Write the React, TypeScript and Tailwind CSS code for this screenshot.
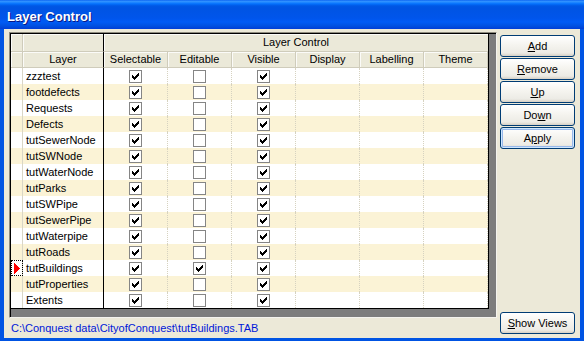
import React from "react";

const LAYERS = [
  "zzztest",
  "footdefects",
  "Requests",
  "Defects",
  "tutSewerNode",
  "tutSWNode",
  "tutWaterNode",
  "tutParks",
  "tutSWPipe",
  "tutSewerPipe",
  "tutWaterpipe",
  "tutRoads",
  "tutBuildings",
  "tutProperties",
  "Extents",
];

const COLUMNS = ["Selectable", "Editable", "Visible", "Display", "Labelling", "Theme"];
const CURRENT = "tutBuildings";

// classic 7x7 tick, drawn pixel by pixel inside the 11x11 box
const TICK = [
  [8, 2, 1],
  [7, 3, 2],
  [2, 4, 1],
  [6, 4, 3],
  [2, 5, 2],
  [5, 5, 3],
  [2, 6, 5],
  [3, 7, 3],
  [4, 8, 1],
]
  .map(([x, y, w]) => `M${x} ${y}h${w}v1h-${w}z`)
  .join("");

function CheckBox({ on }: { on: boolean }) {
  return (
    <span className="block w-[13px] h-[13px] border border-[#858585] bg-white">
      {on && (
        <svg width="11" height="11" viewBox="0 0 11 11" shapeRendering="crispEdges">
          <path d={TICK} fill="#000" />
        </svg>
      )}
    </span>
  );
}

function HeadCell({ className = "", children }: { className?: string; children?: React.ReactNode }) {
  return (
    <div
      className={`flex items-center justify-center bg-[#ebe9d9] border-b border-[#cfccbb] shadow-[inset_1px_1px_0_#fbfbf8] ${className}`}
    >
      {children}
    </div>
  );
}

function XpButton({ children, focused = false }: { children: React.ReactNode; focused?: boolean }) {
  return (
    <button
      type="button"
      className={`h-[22px] w-[75px] rounded-[3px] border border-[#003c74] text-[11px] text-black leading-none bg-[linear-gradient(180deg,#ffffff_0%,#f5f4ef_45%,#ecebe5_85%,#d6d0c5_100%)] ${
        focused ? "shadow-[inset_0_0_0_1px_#cee7ff,inset_0_0_0_2px_#98b8ea]" : ""
      }`}
    >
      {children}
    </button>
  );
}

export default function App() {
  return (
    <div
      className="w-[584px] h-[341px] flex flex-col bg-[#0054e3] overflow-hidden"
      style={{ fontFamily: '"Liberation Sans", Arial, sans-serif' }}
    >
      {/* title bar */}
      <div className="h-[29px] shrink-0 flex items-center pl-[7px] pt-[4px] bg-[linear-gradient(180deg,#0058ee_0px,#3593ff_1px,#288eff_2px,#127dff_3px,#036ffc_4px,#0262ee_5px,#0057e5_6px,#0054e3_8px,#0055eb_18px,#005bf5_22px,#0050e0_26px,#003dd7_29px)]">
        <span className="text-white font-bold text-[13px] [text-shadow:1px_1px_0_#0a1883]">Layer Control</span>
      </div>

      {/* client */}
      <div className="flex-1 mx-[4px] mb-[3px] bg-[#ece9d8] flex pt-[3px] pl-[5px]">
        <div className="flex flex-col">
          {/* grid */}
          <div className="w-[488px] h-[286px] border-t border-l border-[#8e8b7e] border-r border-b border-r-[#f4f3ee] border-b-[#f4f3ee] bg-[#7d7d7d]">
            <div className="h-full border-t border-l border-black">
              <div className="w-[478px] border-r border-b border-black text-[11px] text-black">
                {/* header row 1 */}
                <div className="flex h-[18px]">
                  <HeadCell className="w-[12px] border-r border-r-[#cfccbb]" />
                  <HeadCell className="w-[81px] border-r border-r-black" />
                  <HeadCell className="w-[384px]">Layer Control</HeadCell>
                </div>
                {/* header row 2 */}
                <div className="flex h-[16px]">
                  <HeadCell className="w-[12px] border-r border-r-[#cfccbb]" />
                  <HeadCell className="w-[81px] border-r border-r-black">Layer</HeadCell>
                  {COLUMNS.map((c) => (
                    <HeadCell key={c} className="w-[64px] border-r border-r-[#cfccbb]">
                      {c}
                    </HeadCell>
                  ))}
                </div>
                {/* rows */}
                {LAYERS.map((name, i) => {
                  const current = name === CURRENT;
                  const values = [true, current, true, null, null, null];
                  return (
                    <div key={name} className={`flex h-[16px] ${i % 2 ? "bg-[#fbf3d6]" : "bg-white"}`}>
                      <div
                        className={`w-[12px] flex items-center pl-[3px] border-r border-[#d9d6c6] ${
                          current ? "outline-1 outline-dotted outline-black -outline-offset-1" : ""
                        }`}
                      >
                        {current && (
                          <svg width="6" height="11" viewBox="0 0 6 11" shapeRendering="crispEdges">
                            <polygon points="0,0 6,5.5 0,11" fill="#ff0000" />
                          </svg>
                        )}
                      </div>
                      <div className="w-[81px] flex items-center pl-[3px] border-r border-black whitespace-nowrap">
                        {name}
                      </div>
                      {values.map((v, j) => (
                        <div
                          key={j}
                          className="w-[64px] flex items-center justify-center border-r border-dotted border-[#d6d2c0]"
                        >
                          {v !== null && <CheckBox on={v} />}
                        </div>
                      ))}
                    </div>
                  );
                })}
              </div>
            </div>
          </div>
          {/* path */}
          <div className="flex-1 flex items-center pl-[2px] text-[11px] text-[#0018d8] whitespace-nowrap">
            C:\Conquest data\CityofConquest\tutBuildings.TAB
          </div>
        </div>

        {/* buttons */}
        <div className="ml-[3px] flex flex-col pt-[3px] pb-[4px] gap-[1px]">
          <XpButton>
            <u>A</u>dd
          </XpButton>
          <XpButton>
            <u>R</u>emove
          </XpButton>
          <XpButton>
            <u>U</u>p
          </XpButton>
          <XpButton>
            Do<u>w</u>n
          </XpButton>
          <XpButton focused>
            A<u>p</u>ply
          </XpButton>
          <div className="mt-auto">
            <XpButton>
              <u>S</u>how Views
            </XpButton>
          </div>
        </div>
      </div>
    </div>
  );
}
